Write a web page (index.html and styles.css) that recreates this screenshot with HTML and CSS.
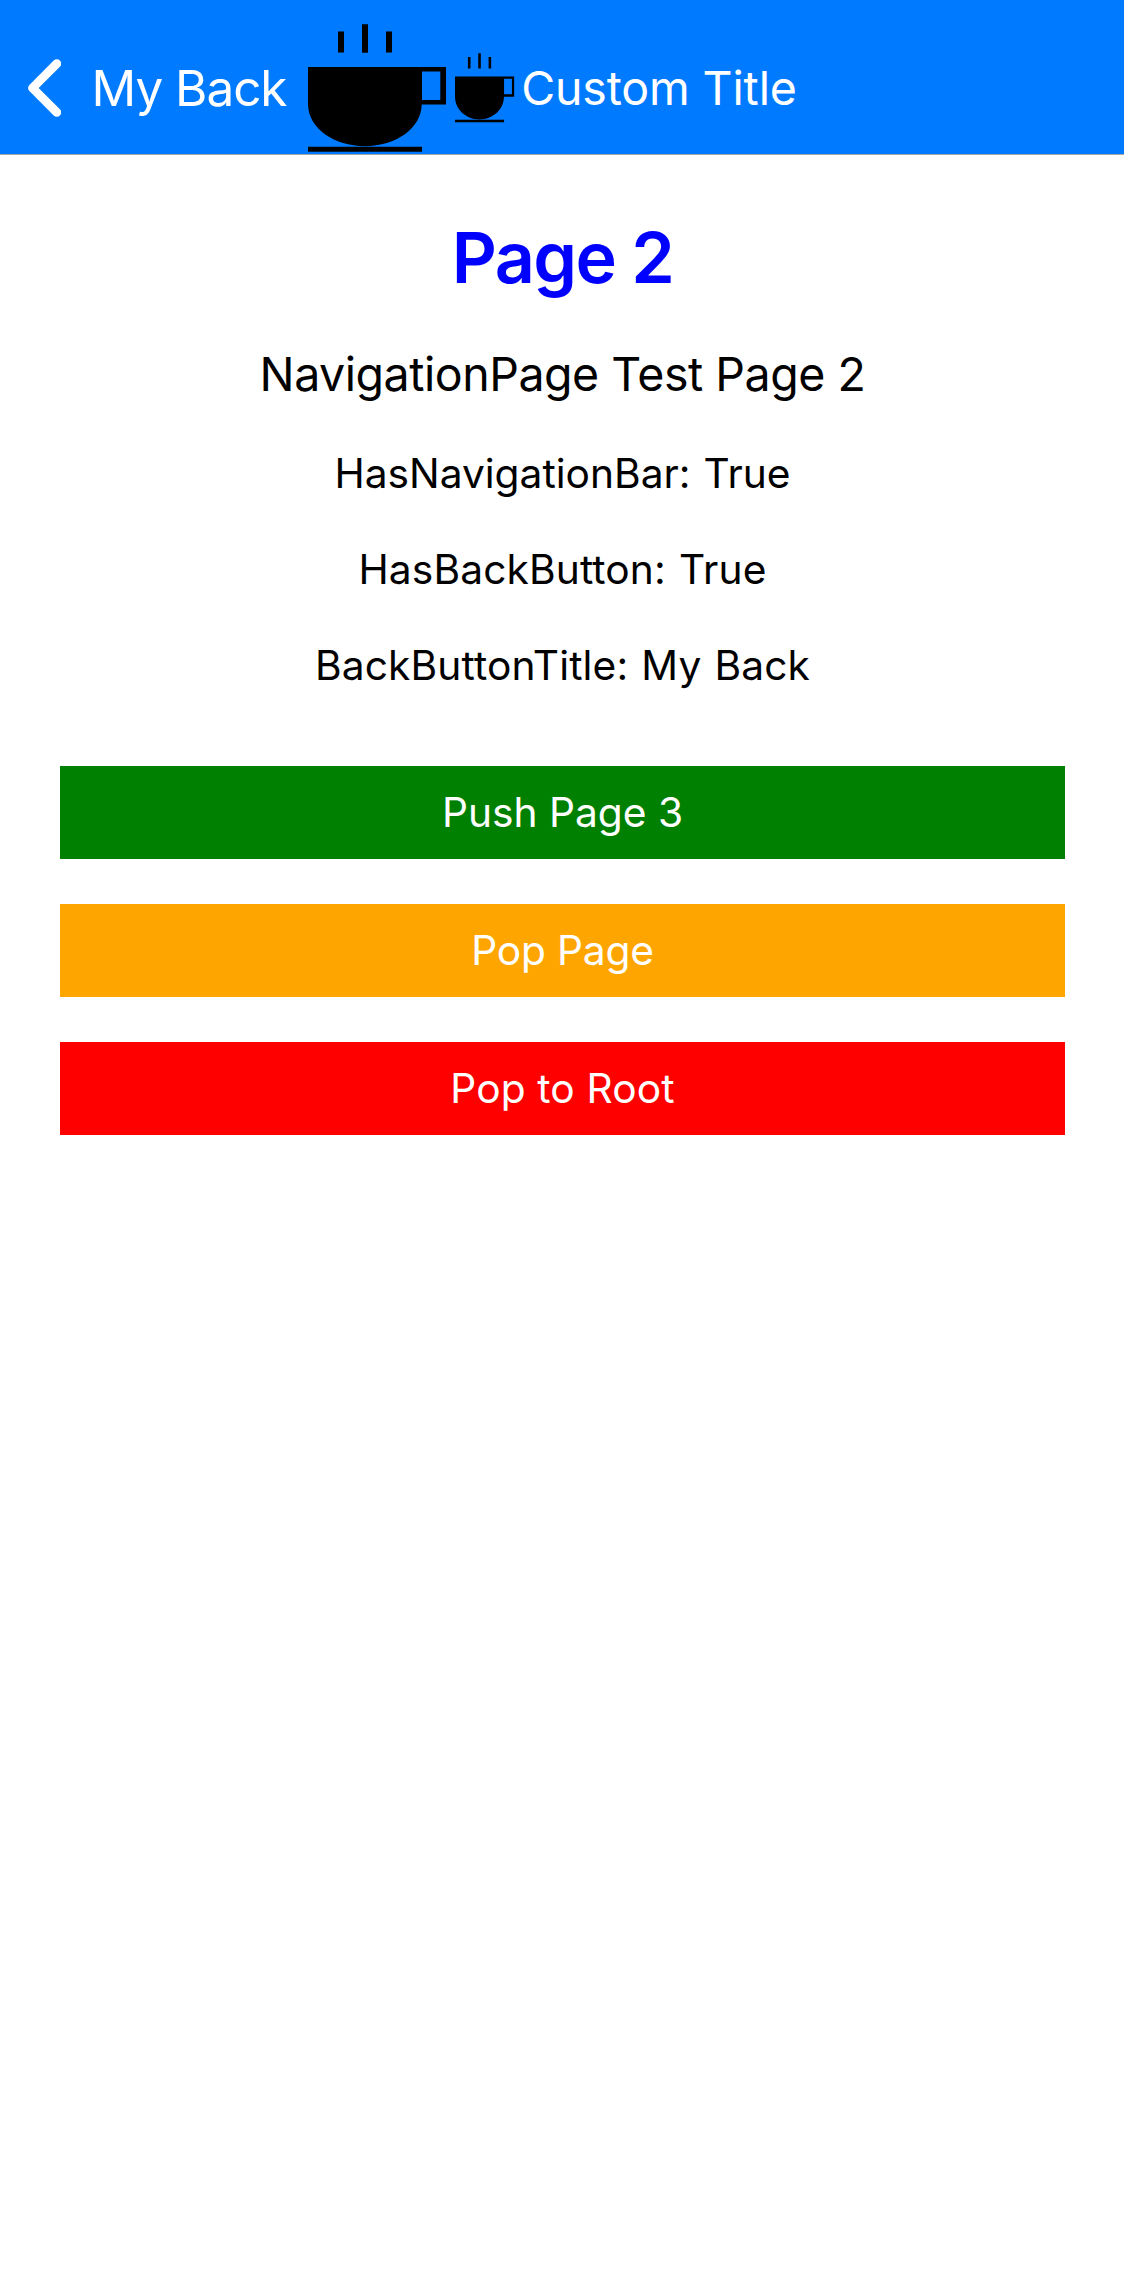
FILE: index.html
```html
<!DOCTYPE html>
<html lang="en">
<head>
<meta charset="utf-8">
<title>Page 2</title>
<link rel="stylesheet" href="styles.css">
</head>
<body>
<svg class="defs" width="0" height="0" aria-hidden="true">
  <symbol id="cup" viewBox="0 0 138 128" preserveAspectRatio="none">
    <path d="M30 7.5h6v21h-6zM54 .3h6v28.4h-6zM78 7.5h6v21h-6z"/>
    <path fill-rule="evenodd" d="M0 43H138V80.5H113.7C113.5 104 88 122.2 57 122.2S.2 104 0 80.5zM114 47.4V76H132.3V47.4z"/>
    <path d="M0 122.7h114v5H0z"/>
  </symbol>
</svg>
<header class="navbar">
  <a class="back" href="#">
    <svg class="chevron" width="33" height="58" viewBox="0 0 33 58"><path d="M28.8 4.6L4.5 29 28.8 53.4"/></svg>
    <span class="back-label">My Back</span>
  </a>
  <svg class="cup-icon"><use href="#cup"/></svg>
  <div class="title-view">
    <svg class="cup-small"><use href="#cup"/></svg>
    <span class="title">Custom Title</span>
  </div>
</header>
<main class="content">
  <h1 class="heading">Page 2</h1>
  <p class="subtitle">NavigationPage Test Page 2</p>
  <p class="info info-bar">HasNavigationBar: True</p>
  <p class="info">HasBackButton: True</p>
  <p class="info">BackButtonTitle: My Back</p>
  <div class="actions">
    <button class="btn push">Push Page 3</button>
    <button class="btn pop">Pop Page</button>
    <button class="btn root">Pop to Root</button>
  </div>
</main>
</body>
</html>
```
FILE: styles.css
```css
* { box-sizing: border-box; }
body {
  margin: 0;
  min-height: 2286px;
  background: #fff;
  color: #000;
  font-family: Inter, "Liberation Sans", sans-serif;
}
.defs { display: block; height: 0; }
.navbar {
  display: flex;
  height: 155px;
  padding: 22px 0 0 28px;
  background: #007aff;
  border-bottom: 1px solid #a5a6ab;
  color: #fff;
}
.back {
  display: flex;
  align-items: center;
  width: 280px;
  color: inherit;
  text-decoration: none;
  white-space: nowrap;
}
.chevron {
  flex: none;
  fill: none;
  stroke: #fff;
  stroke-width: 8.8;
  stroke-linecap: round;
  stroke-linejoin: round;
}
.back-label {
  margin-left: 30.5px;
  font-size: 49.5px;
  letter-spacing: -1.05px;
}
.cup-icon {
  flex: none;
  width: 138px;
  height: 128px;
  margin-top: 2px;
}
.title-view {
  display: flex;
  align-items: center;
  margin-left: 9.3px;
}
.cup-small { width: 59.4px; height: 69.6px; }
.title {
  margin-left: 6.5px;
  font-size: 46.5px;
  letter-spacing: -0.15px;
  white-space: nowrap;
}
.content {
  display: flex;
  flex-direction: column;
  gap: 45px;
  padding: 60px 59px 60px 60px;
  text-align: center;
}
.heading, .subtitle, .info { margin: 0; }
.heading {
  color: #00f;
  font-size: 70px;
  font-weight: 600;
  line-height: 85px;
  letter-spacing: -1.65px;
}
.subtitle {
  font-size: 46.5px;
  line-height: 58px;
  letter-spacing: -0.47px;
}
.info {
  font-size: 40.7px;
  line-height: 51px;
  letter-spacing: 0.12px;
  word-spacing: 1.5px;
}
.info-bar { letter-spacing: 0; }
.actions {
  display: flex;
  flex-direction: column;
  gap: 45px;
  margin-top: 30px;
}
.btn {
  height: 93px;
  padding: 0;
  border: 0;
  color: #fff;
  font-family: inherit;
  font-size: 40.7px;
}
.push { background: #008000; }
.pop {
  background: #ffa500;
  letter-spacing: -0.17px;
}
.root {
  background: #f00;
  letter-spacing: 0.14px;
}
```
